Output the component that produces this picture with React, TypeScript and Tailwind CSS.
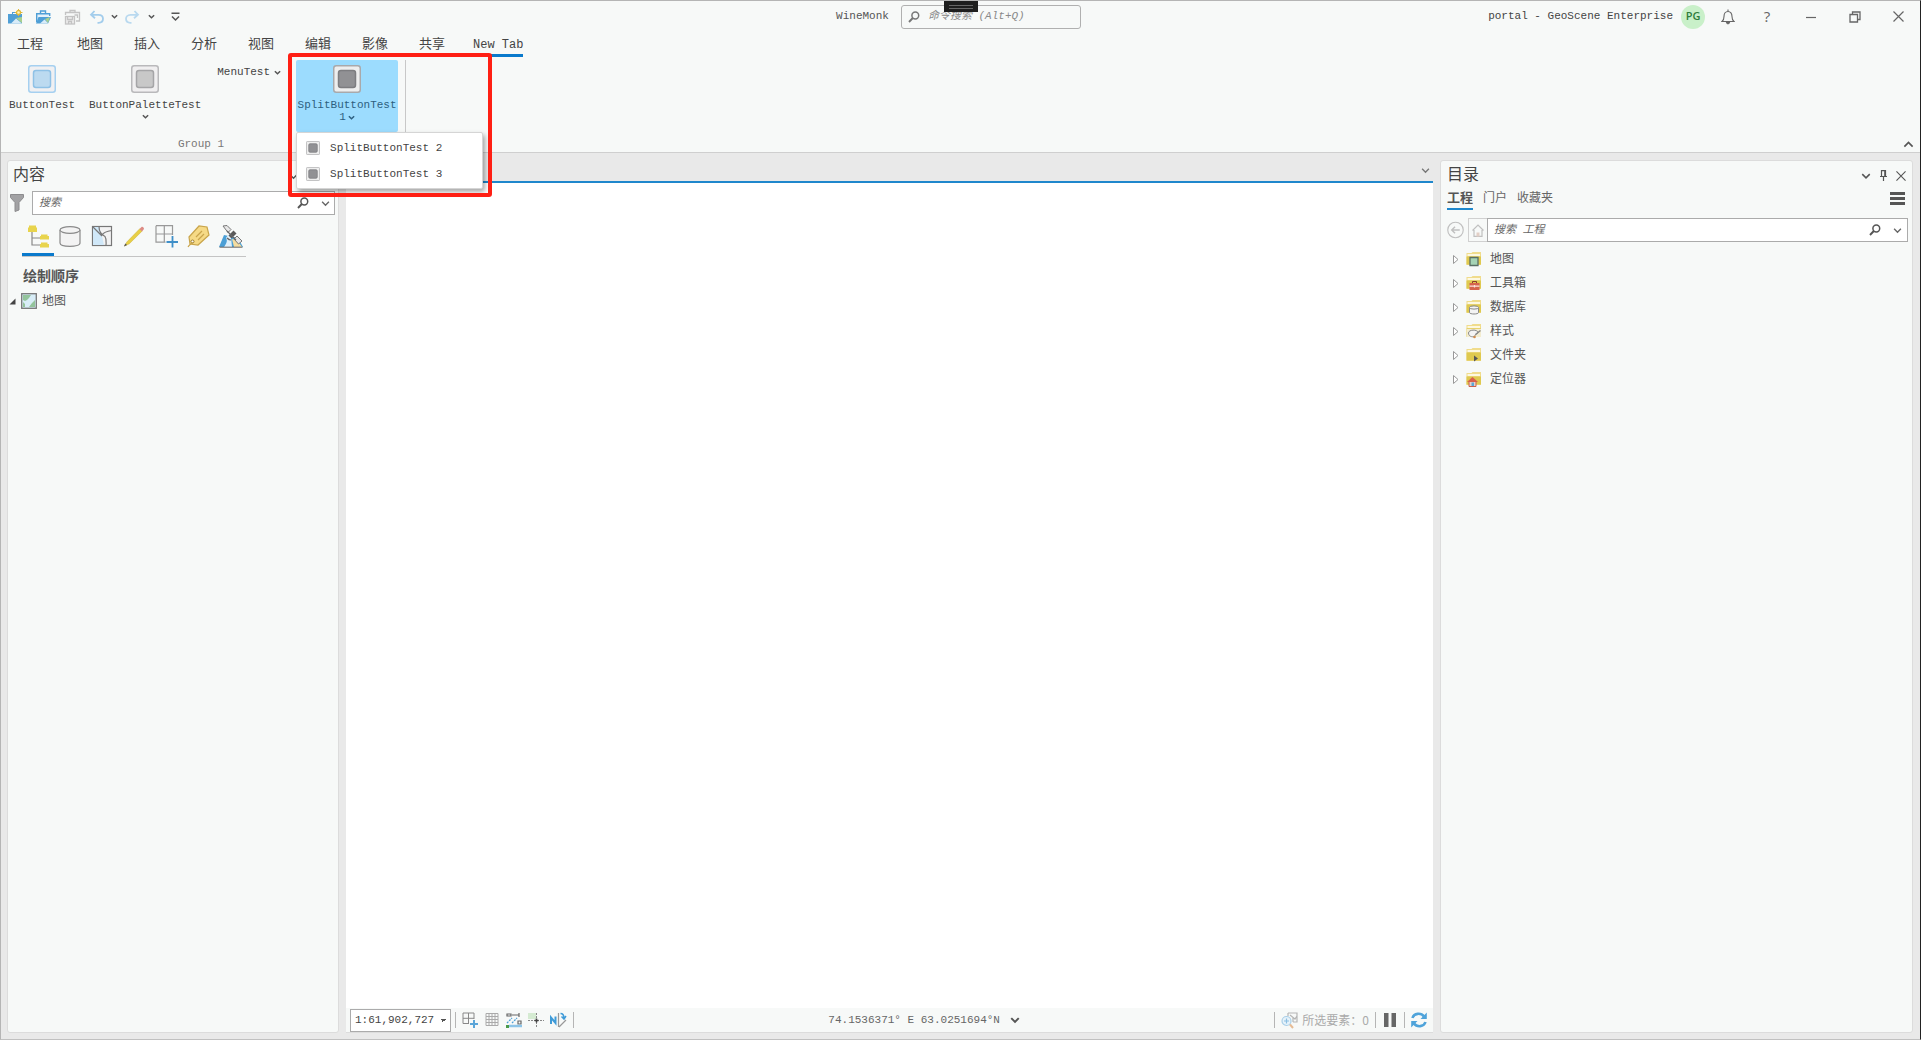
import { useState } from 'react';
import type { ReactNode } from 'react';

type Accent = 'blue' | 'gray' | 'dark';

const ACCENTS: Record<Accent, { outer: string; bg: string; inner: string; fill: string }> = {
  blue: { outer: '#a5d0f0', bg: '#f0f0f2', inner: '#8fc1e6', fill: '#bcdaf0' },
  gray: { outer: '#b9b9bb', bg: '#f0eff0', inner: '#a5a5a7', fill: '#c8c8c8' },
  dark: { outer: '#a9a9ab', bg: '#eeeeee', inner: '#7d7d80', fill: '#919194' },
};

function SquareIcon({ accent, size = 28 }: { accent: Accent; size?: number }) {
  const c = ACCENTS[accent];
  return (
    <svg width={size} height={size} viewBox="0 0 28 28" className="shrink-0">
      <rect x="0.75" y="0.75" width="26.5" height="26.5" rx="2.5" fill={c.bg} stroke={c.outer} strokeWidth="1.5" />
      <rect x="5.5" y="5.5" width="17" height="17" rx="2.5" fill={c.fill} stroke={c.inner} strokeWidth="1.5" />
    </svg>
  );
}

function Chevron({ className = 'text-[#555]', size = 7, weight = 1.7, up = false }: { className?: string; size?: number; weight?: number; up?: boolean }) {
  return (
    <svg width={size} height={size} viewBox="0 0 8 8" fill="none" stroke="currentColor" strokeWidth={weight} className={`shrink-0 ${className}`}>
      <path d={up ? 'M1 5.5l3-3 3 3' : 'M1 2.5l3 3 3-3'} />
    </svg>
  );
}

function SearchIcon({ className = 'text-[#555]' }: { className?: string }) {
  return (
    <svg width="12" height="12" viewBox="0 0 12 12" fill="none" stroke="currentColor" className={`shrink-0 ${className}`}>
      <circle cx="7.3" cy="4.5" r="3.4" strokeWidth="1.5" />
      <path d="M4.8 7L1 11" strokeWidth="1.9" />
    </svg>
  );
}

function CloseIcon({ size = 11 }: { size?: number }) {
  return (
    <svg width={size} height={size} viewBox="0 0 11 11" fill="none" stroke="currentColor" strokeWidth="1.2">
      <path d="M0.5 0.5l10 10M10.5 0.5l-10 10" />
    </svg>
  );
}

function QuickAccess() {
  return (
    <div className="flex items-center pl-1.5">
      <button aria-label="新建工程" className="mr-3">
        <svg width="16" height="16" viewBox="0 0 16 16">
          <path d="M1 5h4V3h5v2h5v9.500H1z" fill="#4f9fd6" />
          <path d="M6 4h3v1H6z" fill="#f7f9f8" />
          <path d="M4 14.500l5-5 6 5z" fill="#d9ecf8" />
          <path d="M9 9l6-1v6z" fill="#a9d18e" />
          <circle cx="11.500" cy="3.500" r="2" fill="#fff4bf" stroke="#e0b93a" strokeWidth="1.300" />
          <path d="M11.500 0v1M11.500 6v1M8 3.500h1M14 3.500h1.500" stroke="#e0b93a" />
        </svg>
      </button>
      <button aria-label="打开工程" className="mr-3">
        <svg width="17" height="16" viewBox="0 0 17 16">
          <path d="M1.700 13V4.700h13V7" fill="#e4f1fa" stroke="#4f9fd6" strokeWidth="1.400" />
          <path d="M5.500 4.500V2h5v2.500" fill="none" stroke="#4f9fd6" strokeWidth="1.400" />
          <path d="M3.500 8H16l-3 6.500H1z" fill="#4f9fd6" />
          <path d="M5 14.500l4.500-4 4 4z" fill="#d9ecf8" />
          <path d="M10 10l5-2-2 6z" fill="#a9d18e" />
        </svg>
      </button>
      <button aria-label="保存工程" className="mr-2">
        <svg width="17" height="16" viewBox="0 0 17 16" fill="none" stroke="#c3c3c3" strokeWidth="1.300">
          <path d="M1.500 6V3.500h14V12H12M6 3.500v-2h5v2" />
          <rect x="1.500" y="7.500" width="9" height="7.500" fill="#eee" />
          <path d="M3.500 7.500v3h5v-3M4.500 15v-2.500h3V15M10.500 6h3v3" />
        </svg>
      </button>
      <button aria-label="撤消">
        <svg width="16" height="14" viewBox="0 0 16 14" fill="none" stroke="#a3cdec" strokeWidth="1.800">
          <path d="M5.500 1L2 4.800l4 3.500M2 4.800h7.500c6 0 6 8 0 8H8.500" />
        </svg>
      </button>
      <button aria-label="撤消列表" className="mx-1.5"><Chevron /></button>
      <button aria-label="恢复">
        <svg width="16" height="14" viewBox="0 0 16 14" fill="none" stroke="#b9d9ef" strokeWidth="1.800">
          <path d="M10.500 1L14 4.800l-4 3.500M14 4.800H6.500c-6 0-6 8 0 8H7.500" />
        </svg>
      </button>
      <button aria-label="恢复列表" className="ml-2"><Chevron /></button>
      <button aria-label="自定义快速访问工具栏" className="ml-4">
        <svg width="9" height="10" viewBox="0 0 9 10" fill="none" stroke="#555" strokeWidth="1.500">
          <path d="M0.500 1.200h8M1 4.500l3.500 3.500L8 4.500" />
        </svg>
      </button>
    </div>
  );
}

function TitleBar() {
  return (
    <header className="grid h-[31px] grid-cols-[1fr_auto_1fr] items-center">
      <QuickAccess />
      <div className="flex items-center gap-3 pr-1">
        <span className="text-[#555]">WineMonk</span>
        <label className="flex h-6 w-[180px] items-center gap-2 rounded-[3px] border border-[#b0b0b0] pl-1.5">
          <SearchIcon className="text-[#777]" />
          <input aria-label="命令搜索" placeholder="命令搜索 (Alt+Q)" className="w-full min-w-0 bg-transparent italic outline-none placeholder:text-[#8a8a8a]" />
        </label>
      </div>
      <div className="flex items-center justify-end pr-4 text-[#666]">
        <span className="text-[#444]">portal - GeoScene Enterprise</span>
        <button className="ml-2 size-6 rounded-full bg-[#c9f0c9] font-['Open_Sans',sans-serif] text-[11px] font-semibold text-[#2f7d3b]">PG</button>
        <button aria-label="通知" className="ml-4">
          <svg width="14" height="16" viewBox="0 0 14 16" fill="none" stroke="currentColor" strokeWidth="1.100">
            <path d="M1 12.500h12c-1.500-1-2-2-2-5 0-3-1.500-5-4-5s-4 2-4 5c0 3-.5 4-2 5zM7 0.500v2" />
            <path d="M5.500 13.500c.4 1.800 2.600 1.800 3 0z" fill="currentColor" />
          </svg>
        </button>
        <button aria-label="帮助" className="ml-5 w-6 font-['Open_Sans',sans-serif] text-[15px]">?</button>
        <button aria-label="最小化" className="ml-[26px]">
          <svg width="12" height="12" viewBox="0 0 12 12" stroke="currentColor" strokeWidth="1.200"><path d="M1 6.500h10" /></svg>
        </button>
        <button aria-label="还原" className="ml-8">
          <svg width="12" height="12" viewBox="0 0 12 12" fill="none" stroke="currentColor" strokeWidth="1.300">
            <path d="M1 3.500h7.500V11H1zM3.500 3.500V1H11v7.500H8.500" />
          </svg>
        </button>
        <button aria-label="关闭" className="ml-8"><CloseIcon /></button>
      </div>
    </header>
  );
}

const RIBBON_TABS = ['工程', '地图', '插入', '分析', '视图', '编辑', '影像', '共享'];

function RibbonTabs() {
  return (
    <nav className="flex h-[25px] gap-px pl-px text-[13px] text-[#444]">
      {RIBBON_TABS.map((tab) => (
        <button key={tab} className="w-14 first:mr-[3px]">{tab}</button>
      ))}
      <button className="ml-3 border-b-3 border-[#0a7acc] pt-1 text-xs">New Tab</button>
    </nav>
  );
}

function SplitButton() {
  const [open, setOpen] = useState(true);
  return (
    <div className="relative">
      <button onClick={() => setOpen(!open)} className="flex h-[72px] w-[102px] flex-col items-center rounded-[2px] bg-[#9cdcfe] pt-[5px] leading-3 text-[#2d5f80]">
        <SquareIcon accent="dark" />
        <span className="mt-1.5">SplitButtonTest</span>
        <span className="flex items-center gap-0.5">1<Chevron className="text-[#2d5f80]" /></span>
      </button>
      {open && (
        <div className="absolute left-0 top-full z-10 w-[187px] rounded-[2px] border border-[#d5d5d5] bg-white pb-px pt-0.5 text-[#444] shadow-[2px_3px_5px_rgba(0,0,0,0.35)]">
          {[2, 3].map((n) => (
            <button key={n} className="flex h-[26px] w-full items-center gap-2.5 pl-[9px]">
              <SquareIcon accent="dark" size={14} />
              SplitButtonTest {n}
            </button>
          ))}
        </div>
      )}
      {/* highlight frame */}
      <div className="pointer-events-none absolute -left-2 -top-[7px] z-20 h-36 w-[204px] rounded-[3px] border-4 border-[#ff1f14]" />
    </div>
  );
}

function Ribbon() {
  return (
    <div className="flex h-24 border-b border-[#cfcfcf] pt-[3px]">
      <div className="flex flex-col pl-1">
        <div className="flex h-[72px] items-start gap-1.5 border-r border-[#c8c8c8] pr-[7px]">
          <button className="flex flex-col items-center px-1 pt-[5px] leading-3">
            <SquareIcon accent="blue" />
            <span className="mt-1.5">ButtonTest</span>
          </button>
          <button className="flex flex-col items-center px-1 pt-[5px] leading-3">
            <SquareIcon accent="gray" />
            <span className="mt-1.5">ButtonPaletteTest</span>
            <Chevron className="mt-0.5 text-[#555]" />
          </button>
          <button className="ml-0.5 mr-[5px] flex items-center gap-1 px-1 pt-1">
            MenuTest <Chevron />
          </button>
          <SplitButton />
        </div>
        <div className="h-5 border-r border-[#c8c8c8] pr-2 pt-1 text-center leading-4 text-[#777]">Group 1</div>
      </div>
      <button aria-label="折叠功能区" className="ml-auto self-end pb-0.5 pr-1.5"><Chevron up size={11} weight={1.2} /></button>
    </div>
  );
}

function SearchBox({ label, className }: { label: string; className: string }) {
  return (
    <label className={`flex h-6 min-w-0 flex-1 items-center border border-[#ababab] bg-white pl-1.5 ${className}`}>
      <input aria-label={label} placeholder={label} className="min-w-0 flex-1 italic outline-none placeholder:text-[#666]" />
      <SearchIcon />
      <Chevron className="ml-3 text-[#666]" size={9} weight={1.2} />
    </label>
  );
}

const CONTENT_TOOLS: { label: string; icon: ReactNode }[] = [
  {
    label: '按绘制顺序列出',
    icon: (
      <>
        <path d="M5 6v14h8M5 13h8" fill="none" stroke="#888" strokeWidth="1.200" />
        <path d="M2 0.500h7v2h1v4.500H1v-4.500h1zM14 9.500h6.500v1.500h1.500v3.500h-9v-3.500h1zM14 17.500h6.500v1.500h1.500v3.500h-9v-3.500h1z" fill="#e8d44d" />
      </>
    ),
  },
  {
    label: '按数据源列出',
    icon: (
      <g fill="#f3f3f3" stroke="#8a8a8a" strokeWidth="1.200">
        <path d="M1 5v13c0 4.500 20 4.500 20 0V5" />
        <ellipse cx="11" cy="5" rx="10" ry="3.300" />
      </g>
    ),
  },
  {
    label: '按选择列出',
    icon: (
      <g stroke="#777" strokeWidth="1.200">
        <rect x="1.500" y="1.500" width="19" height="19" fill="#f3f3f3" />
        <path d="M2 2h6l3 9 2 9H2z" fill="#d0e8f8" stroke="none" />
        <path d="M2 2l9 9M8 1.500c0 5 2 8 6 10 2 3 1 6 1 9M11 10c2-3 6-4 9.500-4.500" fill="none" />
      </g>
    ),
  },
  {
    label: '按编辑列出',
    icon: (
      <>
        <path d="M1.500 21L4 16.800 16.800 3.700l2.400 2.300L6.300 18.800z" fill="#e8cf45" stroke="#c9ae2e" strokeWidth="0.500" />
        <path d="M16.500 4l2-2c1-1 3.200 1.200 2.300 2.300L19 6.500z" fill="#dd8b84" />
        <path d="M1 21.500l1.300-3 1.800 1.600z" fill="#555" />
      </>
    ),
  },
  {
    label: '按捕捉列出',
    icon: (
      <>
        <path d="M1 0.700h16.500V10M1 0.700v16.500h9.500M9.300 0.700v16.500M1 9h16.500" fill="none" stroke="#999" strokeWidth="1.200" />
        <path d="M17.500 11v11.500M11.500 17H23" stroke="#3f8fc8" strokeWidth="1.800" />
      </>
    ),
  },
  {
    label: '按标注列出',
    icon: (
      <>
        <path d="M2 12L12 1l8 1 2 8-11 10-8-1z" fill="#f6da86" stroke="#c9a54b" strokeWidth="1.200" />
        <circle cx="5.500" cy="16.500" r="1.500" fill="#fff" stroke="#9a7a2e" />
        <path d="M5.500 17c-1 2-3 2.500-4.500 5M9 12l6-6M11 15l6-6" stroke="#c9a54b" fill="none" strokeWidth="1.200" />
      </>
    ),
  },
  {
    label: '按影像列出',
    icon: (
      <>
        <path d="M5 10l-5 12h24l-5-9z" fill="#4a9fd6" />
        <path d="M7 13l2-3 3 2 1 10H5c2-3 4-6 2-9z" fill="#dff0fb" />
        <path d="M13 14l5 1 5 7h-8z" fill="#f3dca0" />
        <path d="M0.500 22.200h23" stroke="#666" />
        <path d="M4 1l4-0.500 4 4-3 3zM15 14l3-3 5 5-3.500 3z" fill="#e8e8e8" stroke="#777" />
        <path d="M9.500 10.500l5-5 3 3-5 5z" fill="#5a5a5a" />
        <path d="M8 6l9 9M8 13c1 1 2 2 4 2" stroke="#666" strokeWidth="1.200" fill="none" />
      </>
    ),
  },
];

function ContentsPanel() {
  return (
    <section className="flex w-[332px] shrink-0 flex-col rounded-[3px] border border-[#dcdcdc] bg-[#f7f9f8]">
      <div className="flex h-[30px] items-center pl-[5px] pr-10">
        <h2 className="text-base text-[#444]">内容</h2>
        <button aria-label="内容选项" className="ml-auto"><Chevron size={9} weight={1.2} /></button>
      </div>
      <div className="flex items-center gap-2 pl-0.5 pr-[3px]">
        <svg width="14" height="18" viewBox="0 0 14 18" className="shrink-0">
          <path d="M0.500 0.500h13v3L9 8.500V16l-4 1.500v-9l-4.500-5z" fill="#a2a2a4" stroke="#8c8c8e" />
        </svg>
        <SearchBox label="搜索" className="pr-1" />
      </div>
      <div className="ml-3.5 mt-2 flex self-start border-b border-[#c4c4c4]">
        {CONTENT_TOOLS.map((tool, i) => (
          <button key={tool.label} aria-label={tool.label} className={`flex h-[33px] w-8 justify-center pl-0.5 pt-0.5 ${i === 0 ? 'border-b-3 border-[#0a7acc]' : ''}`}>
            <svg width="24" height="23" viewBox="0 0 24 23">{tool.icon}</svg>
          </button>
        ))}
      </div>
      <h3 className="ml-[15px] mt-2 text-sm font-bold leading-6 text-[#555]">绘制顺序</h3>
      <div className="flex h-6 items-center pl-px text-xs text-[#555]">
        <svg width="7" height="7" viewBox="0 0 7 7"><path d="M6.500 0.500v6h-6z" fill="#444" /></svg>
        <svg width="16" height="16" viewBox="0 0 16 16" className="ml-[5px] mr-[5px]">
          <rect x="0.700" y="0.700" width="14.600" height="14.600" fill="#d8edf7" stroke="#777" strokeWidth="1.300" />
          <path d="M2 2h8L8 5 6 7 4 8 2 7zM2 9l2 2v3H2zM14 7v7H8l3-4z" fill="#93c49b" />
        </svg>
        <span className="pt-0.5">地图</span>
      </div>
    </section>
  );
}

function Divider() {
  return <span className="h-4 w-px shrink-0 bg-[#b5b5b5]" />;
}

const STATUS_TOOLS: { label: string; icon: ReactNode }[] = [
  {
    label: '捕捉',
    icon: (
      <>
        <path d="M1 1h11v6M1 1v10.500h6M6.500 1v10.500M1 6.300h11" fill="none" stroke="#888" />
        <path d="M12 8v8M8 12h8" stroke="#5aa5d8" strokeWidth="2" />
      </>
    ),
  },
  {
    label: '格网',
    icon: <path d="M2 1.500h12v12H2zM5 1.500v12M8 1.500v12M11 1.500v12M2 4.500h12M2 7.500h12M2 10.500h12" fill="none" stroke="#aaa" />,
  },
  {
    label: '推断约束',
    icon: (
      <>
        <path d="M1 2h4v2H1zM6 3h7M13 1v4M12 9h3v3h-3z" fill="none" stroke="#666" strokeWidth="1.200" />
        <path d="M1 11l5-5M6 11l5-5" stroke="#4da0d8" strokeWidth="1.300" strokeDasharray="2 1" />
        <path d="M3 14h13" stroke="#8cc4e8" strokeWidth="2.500" />
        <path d="M0 13h3v3H0z" fill="#4a9a4a" />
      </>
    ),
  },
  {
    label: '校正',
    icon: (
      <>
        <path d="M0 1h8v6H0z" fill="#d5ebd2" />
        <path d="M8.500 1v14M0 8.500h16" stroke="#888" strokeDasharray="2 1" />
        <path d="M6.500 8.500h4M8.500 6.500v4" stroke="#444" strokeWidth="1.500" />
      </>
    ),
  },
  {
    label: '地图旋转',
    icon: (
      <>
        <path d="M1 12V5.500l4.500 5.500V4.500" fill="none" stroke="#3f9bd8" strokeWidth="2" />
        <path d="M8.500 1v14M9 15l7-7" stroke="#999" strokeWidth="1.200" />
        <path d="M10.500 1.500c2.500 0 3.500 2 3.500 5M11.500 4.500L14 7l2-3" fill="none" stroke="#3f9bd8" strokeWidth="1.500" />
      </>
    ),
  },
];

function StatusBar() {
  return (
    <footer className="flex h-6 items-center bg-[#f7f9f8] pl-1 pr-1.5 text-[#666]">
      <select aria-label="比例尺" className="h-[23px] w-[101px] appearance-none border border-[#ababab] bg-white bg-[linear-gradient(45deg,transparent_50%,#555_50%),linear-gradient(-45deg,transparent_50%,#555_50%)] bg-[length:3px_3px,3px_3px] bg-[position:right_7px_center,right_4px_center] bg-no-repeat pl-1 text-[#444]">
        <option>1:61,902,727</option>
      </select>
      <span className="ml-1 flex"><Divider /></span>
      <div className="mx-1.5 flex gap-[5px]">
        {STATUS_TOOLS.map((tool) => (
          <button key={tool.label} aria-label={tool.label}>
            <svg width="17" height="17" viewBox="0 0 17 17">{tool.icon}</svg>
          </button>
        ))}
      </div>
      <Divider />
      <div className="flex flex-1 items-center justify-center gap-2.5">
        <span>74.1536371° E 63.0251694°N</span>
        <button aria-label="坐标单位"><Chevron size={10} weight={1.6} /></button>
      </div>
      <Divider />
      <button className="mx-1.5 flex items-center gap-1 text-xs text-[#aaa]">
        <svg width="17" height="17" viewBox="0 0 17 17" fill="none">
          <path d="M7 1h9v9h-4M7 1v3M9 3l5 4 2-3M12 6v4" stroke="#b5b5b5" strokeWidth="1.200" />
          <circle cx="5.500" cy="9" r="4.500" fill="#e6f2fa" stroke="#a9cfe8" strokeWidth="1.200" />
          <path d="M3 9h5M5.500 6.500v5" stroke="#8bbfe2" strokeWidth="1.200" />
          <path d="M9 12.500l3 3.500" stroke="#e6bb94" strokeWidth="2" />
        </svg>
        <span className="whitespace-nowrap font-['Noto_Sans_CJK_SC',sans-serif]">所选要素：0</span>
      </button>
      <Divider />
      <button aria-label="暂停绘制" className="mx-2">
        <svg width="12" height="14" viewBox="0 0 12 14" fill="#666"><path d="M0 0h4.500v14H0zM7.500 0H12v14H7.500z" /></svg>
      </button>
      <Divider />
      <button aria-label="刷新" className="ml-1.5">
        <svg width="16" height="16" viewBox="0 0 16 16">
          <path d="M1.500 6C3 1 10 0.500 13 4.500M14.500 10C13 15 6 15.500 3 11.500" fill="none" stroke="#4fa3da" strokeWidth="2.600" />
          <path d="M15.800 0.500v6.500H9.500zM0.200 15.500V9h6.300z" fill="#4fa3da" />
        </svg>
      </button>
    </footer>
  );
}

function MapView() {
  return (
    <main className="flex min-w-0 flex-1 flex-col border-b border-[#dcdcdc]">
      <div className="flex h-[23px] items-center justify-end border-b-2 border-[#1f87cc] pr-[3px]">
        <button aria-label="视图列表"><Chevron size={9} weight={1.2} className="text-[#777]" /></button>
      </div>
      <div className="flex-1 bg-white" />
      <StatusBar />
    </main>
  );
}

const CATALOG_ITEMS: { label: string; icon: ReactNode }[] = [
  {
    label: '地图',
    icon: <path d="M4 6.500h8v8H4z" fill="#a5d3b5" stroke="#5a6f66" strokeWidth="1.300" />,
  },
  {
    label: '工具箱',
    icon: (
      <>
        <path d="M6.500 8V6.500h4V8" fill="none" stroke="#8a3b2b" />
        <path d="M3.500 8h10v7h-10z" fill="#d6634c" />
        <path d="M3.500 11.200h10M8.500 10v2.500" stroke="#fbe3dc" strokeWidth="1.200" />
      </>
    ),
  },
  {
    label: '数据库',
    icon: (
      <g fill="#f3f3f3" stroke="#8a8a8a">
        <path d="M3.500 8.500v5c0 2 9 2 9 0v-5" />
        <ellipse cx="8" cy="8.500" rx="4.500" ry="1.600" />
      </g>
    ),
  },
  {
    label: '样式',
    icon: (
      <>
        <path d="M0.500 6h14.500v8H0.500z" fill="#f3ecd0" />
        <path d="M2.500 10c0-3.500 9-4 9.500-0.500 0 2-3 1-3 3s-6.500 2-6.500-2.500z" fill="#f4f4f4" stroke="#888" />
        <path d="M9.500 11.500l5-4" stroke="#888" strokeWidth="1.400" />
        <circle cx="8.500" cy="14" r="1.300" fill="#d08a4c" />
      </>
    ),
  },
  {
    label: '文件夹',
    icon: <path d="M8 8.500l4 3-4 3z" fill="#555" />,
  },
  {
    label: '定位器',
    icon: (
      <>
        <path d="M3 10.500h7v5H3z" fill="#e8cfc8" stroke="#c9604a" />
        <path d="M1 11l5.500-5 5.500 5z" fill="#d9604b" />
        <path d="M5.500 11.500h2.500V15H5.500z" fill="#5aa7d8" />
      </>
    ),
  },
];

function CatalogPanel() {
  return (
    <section className="w-[473px] shrink-0 rounded-[3px] border border-[#dcdcdc] bg-[#f7f9f8] pl-1.5 pr-1">
      <div className="flex h-[29px] items-center gap-2 pr-0.5 text-[#555]">
        <h2 className="mr-auto text-base text-[#444]">目录</h2>
        <button aria-label="目录选项"><Chevron size={10} weight={1.2} /></button>
        <button aria-label="自动隐藏">
          <svg width="9" height="11" viewBox="0 0 9 11" fill="none" stroke="currentColor" strokeWidth="1.200">
            <path d="M2.500 6V0.700h4V6M1 6.500h7M4.500 6.500V11M5.800 1v5" />
          </svg>
        </button>
        <button aria-label="关闭目录"><CloseIcon size={10} /></button>
      </div>
      <div className="flex h-[21px] items-start gap-2.5 pr-[3px] text-xs leading-[18px] text-[#666]">
        <button className="border-b-2 border-[#1f87cc] text-[13px] font-bold text-[#555]">工程</button>
        <button>门户</button>
        <button>收藏夹</button>
        <button aria-label="菜单" className="ml-auto mt-0.5">
          <svg width="15" height="13" viewBox="0 0 15 13" stroke="#555" strokeWidth="3"><path d="M0 1.500h15M0 6.500h15M0 11.500h15" /></svg>
        </button>
      </div>
      <div className="mt-[7px] flex items-center">
        <button aria-label="后退" className="mr-1">
          <svg width="17" height="18" viewBox="0 0 18 18" fill="none" stroke="#c0c0c0" strokeWidth="1.200">
            <circle cx="9" cy="9" r="8.200" />
            <path d="M13.500 9H5M8.500 5.500L5 9l3.500 3.500" strokeWidth="1.500" />
          </svg>
        </button>
        <button aria-label="主目录" className="flex h-6 w-[19px] items-center justify-center border border-r-0 border-[#d0d0d0]">
          <svg width="12" height="13" viewBox="0 0 12 13" fill="none" stroke="#c0c0c0" strokeWidth="1.200">
            <path d="M0.500 6.500L6 1l5.500 5.500M2 6v6.400h8V6" />
            <path d="M4.500 8.500h3v4h-3z" fill="#e2cfc6" stroke="none" />
          </svg>
        </button>
        <SearchBox label="搜索 工程" className="pr-[5px]" />
      </div>
      <ul className="mt-[5px] text-xs text-[#555]">
        {CATALOG_ITEMS.map((item) => (
          <li key={item.label} className="flex h-6 items-center pl-1.5">
            <svg width="6" height="9" viewBox="0 0 6 9"><path d="M0.500 0.500v8l4.500-4z" fill="#fff" stroke="#999" /></svg>
            <svg width="17" height="16" viewBox="0 0 17 16" className="ml-[7px] mr-[7px]">
              <path d="M0.500 4.500V2h5l1-1h8.500v13H0.500z" fill="#f0dc8c" />
              <path d="M1.500 3h12.500v2H1.500z" fill="#fdf8e0" />
              <path d="M0.500 5.500h14.500v8H0.500z" fill="#dfc94f" />
              {item.icon}
            </svg>
            <span className="pt-0.5">{item.label}</span>
          </li>
        ))}
      </ul>
    </section>
  );
}

export default function App() {
  return (
    <div className="relative flex h-screen flex-col border border-b-[#c0c0c0] border-l-[#b5b5b5] border-r-[#222] border-t-[#b5b5b5] bg-[#e9e9e9] font-['Liberation_Mono','Noto_Sans_CJK_SC',monospace] text-[11px] text-[#444]">
      <div className="bg-[#f7f9f8]">
        <TitleBar />
        <RibbonTabs />
        <Ribbon />
      </div>
      <div className="flex min-h-0 flex-1 gap-[7px] pb-1.5 pl-1.5 pr-[7px] pt-[7px]">
        <ContentsPanel />
        <MapView />
        <CatalogPanel />
      </div>
      {/* drag handle over the title bar */}
      <div className="absolute left-1/2 top-0 flex h-[11px] w-[34px] -translate-x-1/2 flex-col items-center justify-center gap-0.5 bg-[#1e1e1e]">
        <span className="h-px w-6 bg-[#666]" />
        <span className="h-px w-6 bg-[#666]" />
      </div>
    </div>
  );
}
